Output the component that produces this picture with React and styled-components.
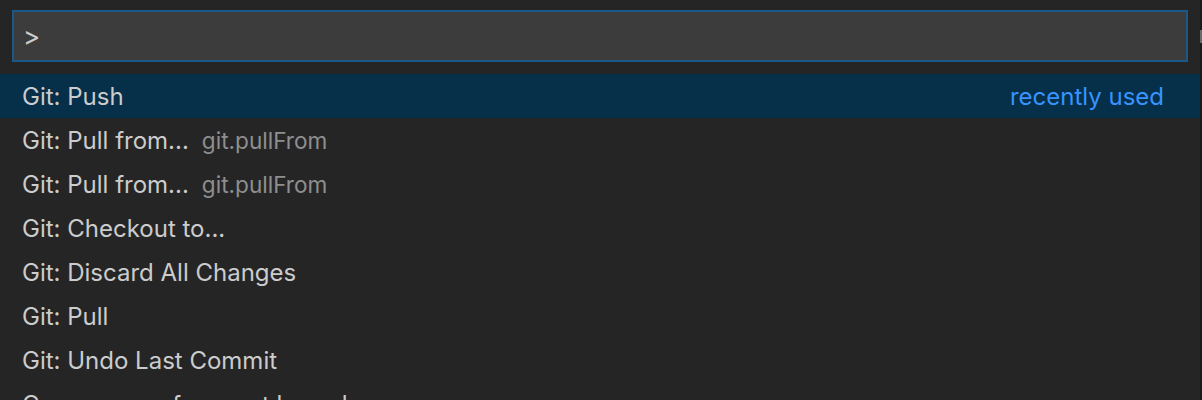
import React from "react";
import styled, { createGlobalStyle } from "styled-components";

const GlobalStyle = createGlobalStyle`
  html, body {
    margin: 0;
    padding: 0;
    background: #252526;
    overflow: hidden;
  }
  body {
    font-family: Inter, "Noto Sans", "Liberation Sans", sans-serif;
  }
`;

const commands = [
  { label: "Git: Push", note: "recently used", selected: true },
  { label: "Git: Pull from...", id: "git.pullFrom" },
  { label: "Git: Pull from...", id: "git.pullFrom" },
  { label: "Git: Checkout to..." },
  { label: "Git: Discard All Changes" },
  { label: "Git: Pull" },
  { label: "Git: Undo Last Commit" },
  { label: "Copy name of current branch" },
];

const App = () => {
  return (
    <Frame>
      <GlobalStyle />
      <Palette>
        <InputWrap>
          <Input defaultValue=">" spellCheck={false} />
        </InputWrap>
        <List>
          {commands.map((c, i) => (
            <Row key={i} selected={c.selected}>
              <Label>{c.label}</Label>
              {c.id && <CommandId>{c.id}</CommandId>}
              {c.note && <Note>{c.note}</Note>}
            </Row>
          ))}
        </List>
      </Palette>
      <Gutter>
        <GutterMark />
      </Gutter>
    </Frame>
  );
};

export default App;

const Frame = styled.div`
  display: flex;
  width: 1202px;
  height: 400px;
  overflow: hidden;
  background: #252526;
`;

const Palette = styled.div`
  flex: 1;
  display: flex;
  flex-direction: column;
`;

const InputWrap = styled.div`
  padding: 10px 12px 12px 12px;
`;

const Input = styled.input`
  box-sizing: border-box;
  width: 1176px;
  height: 52px;
  margin: 0;
  padding: 0 9px;
  background: #3c3c3c;
  border: 2px solid #1b5787;
  color: #cccccc;
  font-family: Inter, "Noto Sans", "Liberation Sans", sans-serif;
  font-size: 26px;
  outline: none;
`;

const List = styled.div`
  display: flex;
  flex-direction: column;
`;

const Row = styled.div`
  display: flex;
  align-items: center;
  height: 44px;
  flex-shrink: 0;
  padding: 0 36px 0 22px;
  background: ${(p) => (p.selected ? "#062f4a" : "transparent")};
  white-space: nowrap;
`;

const Label = styled.span`
  font-size: 24px;
  color: #cccccc;
`;

const CommandId = styled.span`
  margin-left: 13px;
  font-size: 22.6px;
  color: #8e8e8e;
`;

const Note = styled.span`
  margin-left: auto;
  font-size: 24px;
  color: #3794ff;
`;

const Gutter = styled.div`
  width: 2px;
  height: 100%;
  background: #1a1a1a;
  padding-top: 30px;
  box-sizing: border-box;
`;

const GutterMark = styled.div`
  width: 2px;
  height: 13px;
  background: #6a6a6a;
`;
